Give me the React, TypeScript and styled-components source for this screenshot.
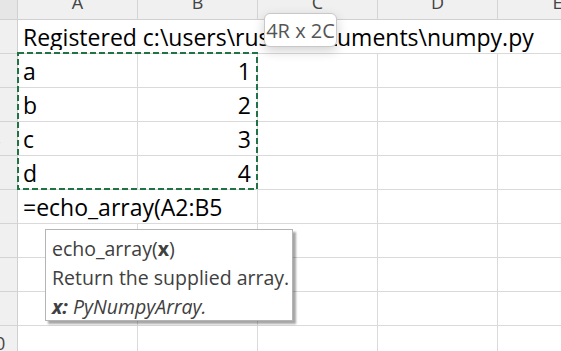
import styled, { createGlobalStyle } from "styled-components"

const GlobalStyle = createGlobalStyle`
  html, body {
    margin: 0;
    padding: 0;
    background: #ffffff;
    overflow: hidden;
  }
`

const columns = ["A", "B", "C", "D", "E"]

const App = () => {
  return (
    <>
      <GlobalStyle />
      <Sheet>
        <Grid>
          <Corner />
          {columns.map((c) => (
            <ColHead key={c}>
              <span>{c}</span>
            </ColHead>
          ))}

          <RowHead>1</RowHead>
          <Cell $span={5}>
            {/* the part under the size tooltip is kept to a fixed run */}
            <UnderTip>Registered c:\users\russe\doc</UnderTip>
            <span>uments\numpy.py</span>
          </Cell>

          <RowHead>2</RowHead>
          <Cell>a</Cell>
          <Cell $right>1</Cell>
          <Cell />
          <Cell />
          <Cell />

          <RowHead>3</RowHead>
          <Cell>b</Cell>
          <Cell $right>2</Cell>
          <Cell />
          <Cell />
          <Cell />

          <RowHead>4</RowHead>
          <Cell>c</Cell>
          <Cell $right>3</Cell>
          <Cell />
          <Cell />
          <Cell />

          <RowHead>5</RowHead>
          <Cell>d</Cell>
          <Cell $right>4</Cell>
          <Cell />
          <Cell />
          <Cell />

          <RowHead>6</RowHead>
          <Cell $span={2}>=echo_array(A2:B5</Cell>
          <Cell />
          <Cell />
          <Cell />

          {[7, 8, 9, 10].map((r) => (
            <Row key={r} n={r} />
          ))}
        </Grid>

        <CopyMarquee width="242" height="139" viewBox="0 0 242 139">
          <rect
            x="1"
            y="1"
            width="239"
            height="136"
            fill="none"
            stroke="#217346"
            strokeWidth="2"
            strokeDasharray="6 3"
          />
        </CopyMarquee>

        <SizeTip>4R x 2C</SizeTip>

        <FuncTip>
          <TipLine>
            echo_array(<b>x</b>)
          </TipLine>
          <TipLine>Return the supplied array.</TipLine>
          <TipLine>
            <i>
              <b>x:</b> PyNumpyArray.
            </i>
          </TipLine>
        </FuncTip>
      </Sheet>
    </>
  )
}

const Row = ({ n }: { n: number }) => (
  <>
    <RowHead>{n}</RowHead>
    <Cell />
    <Cell />
    <Cell />
    <Cell />
    <Cell />
  </>
)

export default App

const Sheet = styled.div`
  position: relative;
  width: 561px;
  height: 351px;
  overflow: hidden;
  background: #ffffff;
`

const Grid = styled.div`
  display: grid;
  grid-template-columns: 41px repeat(5, 120px);
  grid-template-rows: 20px repeat(10, 34px);
  margin-left: -23px;
`

const Corner = styled.div`
  box-sizing: border-box;
  background: #e6e6e6;
  border-right: 1px solid #d0d0d0;
  border-bottom: 1px solid #d0d0d0;
`

const ColHead = styled.div`
  box-sizing: border-box;
  background: #f0f0f0;
  border-right: 1px solid #d4d4d4;
  border-bottom: 1px solid #d0d0d0;
  overflow: hidden;
  display: flex;
  justify-content: center;

  span {
    font-family: "Open Sans", "Noto Sans", sans-serif;
    font-size: 18px;
    line-height: 18px;
    color: #444444;
    margin-top: -7px;
  }
`

const RowHead = styled.div`
  box-sizing: border-box;
  background: #f0f0f0;
  border-right: 1px solid #d0d0d0;
  border-bottom: 1px solid #d4d4d4;
  display: flex;
  align-items: center;
  justify-content: center;
  padding-right: 4px;
  font-family: "Open Sans", "Noto Sans", sans-serif;
  font-size: 18px;
  color: #444444;
`

const Cell = styled.div<{ $span?: number; $right?: boolean }>`
  box-sizing: border-box;
  grid-column: span ${(p) => p.$span || 1};
  border-right: 1px solid #dadada;
  border-bottom: 1px solid #dadada;
  display: flex;
  align-items: flex-end;
  justify-content: ${(p) => (p.$right ? "flex-end" : "flex-start")};
  padding: 0 6px 3px 5px;
  white-space: nowrap;
  overflow: hidden;
  font-family: "Open Sans", "Noto Sans", sans-serif;
  font-size: 23px;
  line-height: 26px;
  color: #000000;
`

const UnderTip = styled.span`
  display: inline-block;
  flex: none;
  width: 314px;
  overflow: hidden;
  white-space: nowrap;
`

const CopyMarquee = styled.svg`
  position: absolute;
  left: 17px;
  top: 52px;
`

const SizeTip = styled.div`
  position: absolute;
  left: 264px;
  top: 13px;
  width: 73px;
  height: 34px;
  box-sizing: border-box;
  border: 1px solid #c8c8c8;
  border-radius: 6px;
  background: #ffffff;
  box-shadow: 0 4px 12px rgba(0, 0, 0, 0.18);
  display: flex;
  align-items: center;
  justify-content: center;
  font-family: "Open Sans", "Noto Sans", sans-serif;
  font-size: 20px;
  color: #555555;
  white-space: nowrap;
`

const FuncTip = styled.div`
  position: absolute;
  left: 45px;
  top: 229px;
  width: 248px;
  height: 92px;
  box-sizing: border-box;
  border: 1px solid #b4b4b4;
  background: #ffffff;
  box-shadow: 3px 3px 2px rgba(0, 0, 0, 0.35);
  padding: 4px 0 0 6px;
  font-family: "Open Sans", "Noto Sans", sans-serif;
  font-size: 19.5px;
  color: #404040;
`

const TipLine = styled.div`
  line-height: 29px;
  white-space: nowrap;

  b {
    font-weight: 700;
  }
`
